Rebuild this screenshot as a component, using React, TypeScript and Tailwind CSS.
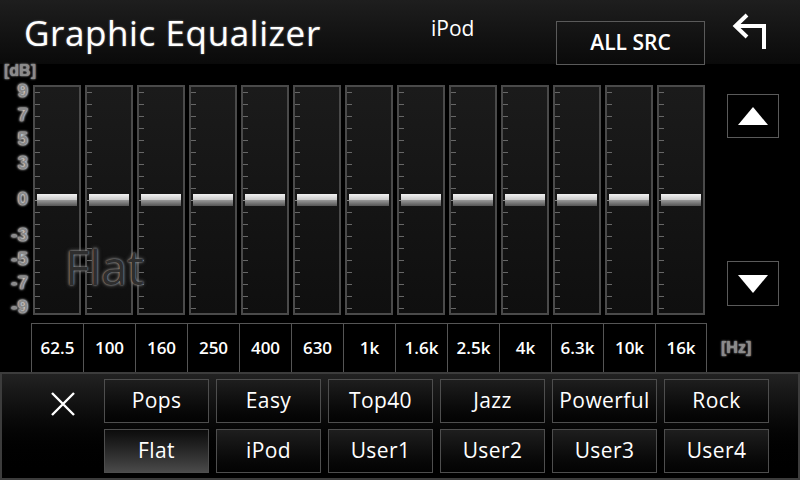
import React from 'react';

const FONT = { fontFamily: '"Open Sans", "Noto Sans", sans-serif' };
const AXIS_FONT = { fontFamily: '"Liberation Sans", Arial, sans-serif' };

const freqs = ['62.5', '100', '160', '250', '400', '630', '1k', '1.6k', '2.5k', '4k', '6.3k', '10k', '16k'];
const axis = [9, 7, 5, 3, 0, -3, -5, -7, -9];
const ticks = Array.from({ length: 19 }, (_, i) => 9 - i);
const presets = [
  ['Pops', 'Easy', 'Top40', 'Jazz', 'Powerful', 'Rock'],
  ['Flat', 'iPod', 'User1', 'User2', 'User3', 'User4'],
];

// 230px track, zero at 114px from the top, 12px per dB
const yOf = (db: number) => 114 - db * 12;

const Slider = () => (
  <div className="relative w-[48px] h-[230px] border-2 border-[#4a4a4a] bg-gradient-to-b from-[#1b1b1b] to-[#0f0f0f]">
    {ticks.map(t => (
      <div
        key={t}
        className={`absolute left-0 h-px ${t === 0 ? 'w-[6px] bg-[#888]' : 'w-[5px] bg-[#666]'}`}
        style={{ top: yOf(t) - 1 }}
      />
    ))}
    <div className="absolute left-[2px] right-[2px] top-[107px] h-[12px] flex flex-col">
      <div className="h-[6px] bg-gradient-to-b from-[#f2f2f2] to-[#c8c8c8]" />
      <div className="h-[6px] bg-gradient-to-b from-[#9a9a9a] to-[#555]" />
    </div>
  </div>
);

export default function App() {
  return (
    <div className="w-[800px] h-[480px] bg-black text-white overflow-hidden flex flex-col" style={FONT}>
      {/* header */}
      <div className="h-[64px] shrink-0 flex items-center bg-gradient-to-b from-[#1e1e1e] to-[#0a0a0a]">
        <div className="pl-[24px] w-[420px] text-[35px] leading-none tracking-[0.6px] [text-shadow:0_0_2px_#888]">
          Graphic Equalizer
        </div>
        <div className="w-[136px] pl-[11px] text-[21px] leading-none self-start pt-[18px]">iPod</div>
        <div className="w-[149px] h-[44px] self-start mt-[21px] border border-[#5a5a5a] flex items-center justify-center text-[21px] font-semibold">
          ALL SRC
        </div>
        <div className="flex-1 flex justify-center">
          <svg width="40" height="40" viewBox="0 0 40 40" className="ml-[-4px]">
            <path d="M33 37V14H5" fill="none" stroke="#fff" strokeWidth="4" />
            <path d="M16 3 4.5 14 16 25" fill="none" stroke="#fff" strokeWidth="4" />
          </svg>
        </div>
      </div>

      {/* body */}
      <div className="h-[308px] shrink-0 flex">
        <div className="w-[33px] shrink-0 flex flex-col" style={AXIS_FONT}>
          <div className="h-[18px] pl-[4px] text-[16px] leading-[18px] font-bold text-[#8a8a8a] [text-shadow:0_0_2px_#ddd] -mt-[2px] mb-[5px] whitespace-nowrap">
            [dB]
          </div>
          <div className="relative h-[230px]">
            {axis.map(a => (
              <div
                key={a}
                className="absolute right-[5px] text-[19px] leading-[18px] font-bold text-[#8a8a8a] [text-shadow:0_0_2px_#fff,0_0_3px_#fff]"
                style={{ top: yOf(a) - 9 }}
              >
                {a < 0 ? `-${-a}` : a}
              </div>
            ))}
          </div>
        </div>

        <div className="flex flex-col">
          <div className="relative flex gap-[4px] mt-[21px]">
            {freqs.map(f => (
              <Slider key={f} />
            ))}
            <div className="absolute left-[32px] top-[159px] text-[47px] leading-none text-[#2e2e2e] [text-shadow:0_0_2px_#aaa,0_0_4px_#777]">
              Flat
            </div>
          </div>
          <div className="flex mt-[8px] -ml-[2px] h-[49px]">
            {freqs.map((f, i) => (
              <div
                key={f}
                className={`w-[52px] border-t border-l border-[#555] flex items-center justify-center text-[17px] font-semibold ${
                  i === freqs.length - 1 ? 'border-r' : ''
                }`}
              >
                {f}
              </div>
            ))}
          </div>
        </div>

        <div className="flex-1 flex flex-col items-start pl-[20px]">
          <div className="mt-[30px] w-[52px] h-[44px] border border-[#5a5a5a] flex items-center justify-center">
            <svg width="30" height="18" viewBox="0 0 30 18">
              <path d="M15 0 30 18H0Z" fill="#fff" />
            </svg>
          </div>
          <div className="mt-[123px] w-[52px] h-[45px] border border-[#5a5a5a] flex items-center justify-center">
            <svg width="30" height="18" viewBox="0 0 30 18">
              <path d="M0 0H30L15 18Z" fill="#fff" />
            </svg>
          </div>
          <div
            className="mt-[30px] -ml-[6px] text-[16px] font-bold text-[#8a8a8a] [text-shadow:0_0_2px_#ddd]"
            style={AXIS_FONT}
          >
            [Hz]
          </div>
        </div>
      </div>

      {/* preset panel */}
      <div className="flex-1 flex border-2 border-[#3c3c3c] bg-gradient-to-b from-[#222] to-[#000]">
        <div className="w-[102px] shrink-0 pl-[48px] pt-[17px]">
          <svg width="26" height="26" viewBox="0 0 26 26">
            <path d="M2 2 24 24M24 2 2 24" stroke="#fff" strokeWidth="2.4" />
          </svg>
        </div>
        <div className="flex flex-col gap-[6px] pt-[5px]">
          {presets.map((row, r) => (
            <div key={r} className="flex gap-[7px]">
              {row.map(p => (
                <div
                  key={p}
                  className={`w-[105px] h-[44px] border border-[#4e4e4e] flex items-center justify-center text-[21px] tracking-[0.4px] ${
                    p === 'Flat'
                      ? 'bg-gradient-to-b from-[#0c0c0c] to-[#4a4a4a]'
                      : 'bg-gradient-to-b from-[#1e1e1e] to-[#030303]'
                  }`}
                >
                  {p}
                </div>
              ))}
            </div>
          ))}
        </div>
      </div>
    </div>
  );
}
